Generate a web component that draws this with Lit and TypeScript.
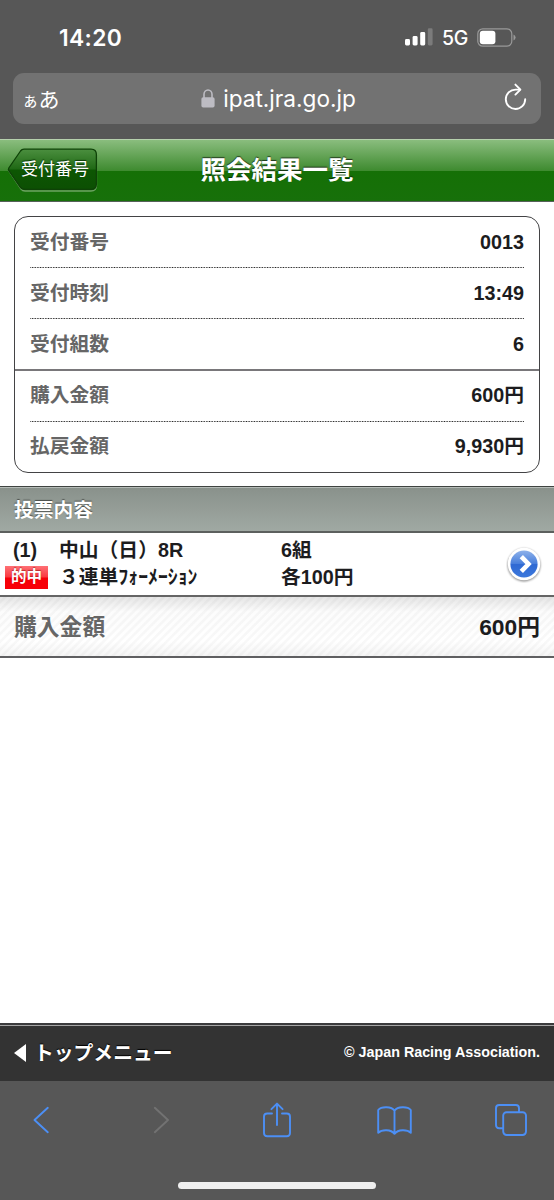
import { LitElement, html, css } from "lit";
import { customElement } from "lit/decorators.js";

const summary = [
  [
    ["受付番号", "0013"],
    ["受付時刻", "13:49"],
    ["受付組数", "6"],
  ],
  [
    ["購入金額", "600円"],
    ["払戻金額", "9,930円"],
  ],
];

@customElement("phone-chrome")
class PhoneChrome extends LitElement {
  static styles = css`
    :host { display: block; height: 139px; background: #575757; color: #fff;
      font-family: Inter, "Noto Sans CJK JP", sans-serif; }
    .status { display: flex; align-items: center; justify-content: space-between;
      height: 73px; box-sizing: border-box; padding: 1px 38px 0 59px; }
    .clock { font-size: 22.8px; font-weight: 600; letter-spacing: 0.35px; }
    .signals { display: flex; align-items: center; }
    .net { font-size: 19.5px; font-weight: 500; margin: 1px 9px 0 9px; letter-spacing: -0.3px; }
    .address { display: grid; grid-template-columns: 80px 1fr 80px; align-items: center;
      margin: 0 13px; height: 51px; border-radius: 11px; background: #727272; }
    .aa { padding: 0 0 0 9px; font-family: "Noto Sans CJK JP", sans-serif; font-size: 21px;
      font-weight: 400; white-space: nowrap; line-height: 28px; }
    .small { font-size: 16.5px; }
    .host { display: flex; justify-content: center; align-items: center; gap: 8px;
      font-size: 22.6px; padding-left: 3px; }
    .reload { justify-self: end; margin: 0 14px 2px 0; }
    svg { display: block; flex: none; }
  `;
  render() {
    return html`
      <div class="status">
        <span class="clock">14:20</span>
        <div class="signals">
          <svg width="28" height="18" viewBox="0 0 28 18" fill="#fff">
            <rect x="0" y="11" width="5" height="6.5" rx="1.4" />
            <rect x="7.6" y="8" width="5" height="9.5" rx="1.4" />
            <rect x="15.2" y="4" width="5" height="13.5" rx="1.4" />
            <rect x="22.8" y="0.3" width="4.8" height="17.2" rx="1.4" fill="#7b7b7b" />
          </svg>
          <span class="net">5G</span>
          <svg width="39" height="19" viewBox="0 0 39 19">
            <rect x="0.8" y="0.8" width="34" height="17.4" rx="5" fill="none" stroke="#999" stroke-width="1.2" />
            <rect x="2.8" y="2.8" width="15.6" height="13.4" rx="3" fill="#fff" />
            <path d="M36.5 6.6Q38.6 7.4 38.6 9.5T36.5 12.4Z" fill="#999" />
          </svg>
        </div>
      </div>
      <div class="address">
        <span class="aa"><span class="small">ぁ</span>あ</span>
        <div class="host">
          <svg width="14" height="19" viewBox="0 0 14 19">
            <path d="M3 9V5.3a4 4.3 0 0 1 8 0V9" fill="none" stroke="#bdbcc3" stroke-width="1.6" />
            <rect x="0.4" y="8.3" width="13.2" height="10.3" rx="1.8" fill="#bdbcc3" />
          </svg>
          <span class="url">ipat.jra.go.jp</span>
        </div>
        <svg class="reload" width="24" height="30" viewBox="0 0 24 30" fill="none" stroke="#fff" stroke-width="1.9" stroke-linecap="round" stroke-linejoin="round">
          <path d="M16.8 6.6H12.5A9.7 9.7 0 1 0 22.2 16.3" />
          <path d="M12.4 1.6L17.4 6.6L12.4 11.6" />
        </svg>
      </div>
    `;
  }
}

@customElement("page-header")
class PageHeader extends LitElement {
  static styles = css`
    :host { display: grid; grid-template-columns: 110px 1fr 110px; align-items: center;
      height: 63px; box-sizing: border-box; border-top: 1px solid #b6d0ad; border-bottom: 1px solid #56615a;
      background: linear-gradient(#8abd7e 0, #3f8b30 50%, #157006 50%, #17700a 100%);
      font-family: "Liberation Sans", "Noto Sans CJK JP", sans-serif; color: #fff; }
    .back { display: grid; width: 92px; height: 45px; margin: 0 0 0 7px; }
    .shape, .label { grid-area: 1 / 1; }
    .label { font-size: 17px; line-height: 42px; padding: 1px 0 0 14px; white-space: nowrap;
      text-shadow: 0 -1px 1px #0b3a05; z-index: 1; }
    .title { margin: 0 0 2px; text-align: center; font-size: 25.5px; font-weight: 700; line-height: 40px;
      white-space: nowrap; text-shadow: 0 -1px 1px rgba(0,0,0,.65); }
  `;
  render() {
    return html`
      <div class="back">
        <svg class="shape" width="92" height="45" viewBox="0 0 92 45">
          <defs>
            <linearGradient id="g" x1="0" y1="0" x2="0" y2="1">
              <stop offset="0" stop-color="#4b8f3f" />
              <stop offset="0.5" stop-color="#1f6814" />
              <stop offset="0.51" stop-color="#0d5703" />
              <stop offset="1" stop-color="#0c4f03" />
            </linearGradient>
          </defs>
          <path d="M16.5 2.5H84Q89.5 2.5 89.5 8V37.5Q89.5 43 84 43H18Q15.5 43 14 41L1.5 22.5" fill="none" stroke="#6da262" stroke-width="1.3" />
          <path d="M17 1.2H84Q89.4 1.2 89.4 6.6V36Q89.4 41.4 84 41.4H17.5Q15 41.4 13.5 39.5L1.8 22.6Q1 21.3 1.8 20L13.5 3Q14.8 1.2 17 1.2Z" fill="url(#g)" stroke="#0e4207" stroke-width="1.3" />
        </svg>
        <span class="label">受付番号</span>
      </div>
      <h1 class="title">照会結果一覧</h1>
    `;
  }
}

@customElement("receipt-summary")
class ReceiptSummary extends LitElement {
  static styles = css`
    :host { display: block; margin: 14px 14px 0; height: 257px; box-sizing: border-box;
      border: 1px solid #434345; border-radius: 14px; background: #fff;
      font: 700 19.8px "Liberation Sans", "Noto Sans CJK JP", sans-serif; }
    .group + .group { border-top: 2px solid #79777a; }
    .group + .group .row { padding-bottom: 2px; }
    .row { display: flex; justify-content: space-between; align-items: center;
      height: 50px; box-sizing: border-box; margin: 0 15px; line-height: 30px; }
    .dots { height: 1px; margin: 0 15px;
      background: repeating-linear-gradient(90deg, #222 0, #eee 1.32px, #222 2.64px); }
    .name { color: #666; }
    .value { color: #1c1c1e; }
  `;
  render() {
    return summary.map(
      (group) => html`<div class="group">
        ${group.map(
          ([name, value], i) => html`
            ${i ? html`<div class="dots"></div>` : ""}
            <div class="row"><span class="name">${name}</span><span class="value">${value}</span></div>
          `
        )}
      </div>`
    );
  }
}

@customElement("bet-list")
class BetList extends LitElement {
  static styles = css`
    :host { display: block; margin-top: 13px;
      font: 700 19.8px "Liberation Sans", "Noto Sans CJK JP", sans-serif; color: #1c1c1e; }
    .heading { height: 47px; box-sizing: border-box; border-top: 1px solid #3f4341; border-bottom: 2px solid #5c605e;
      box-shadow: inset 0 1px #b5bbb7; background: linear-gradient(#89918b, #a0a9a3);
      padding-left: 14px; line-height: 46px; color: #fff; text-shadow: 0 -1px 1px rgba(0,0,0,.5); }
    .bet { display: grid; grid-template-columns: 54px 222px 1fr 48px; align-items: center;
      height: 64px; box-sizing: border-box; padding-left: 5px; border-bottom: 2px solid #656565; }
    .col { display: grid; grid-template-rows: 27px 27px; align-items: center; line-height: 27px; white-space: nowrap; }
    .no { padding-left: 8px; }
    .hit { width: 43px; height: 23px; line-height: 22px; text-align: center; font-size: 15.5px; color: #fff;
      background: linear-gradient(#ff7075, #f93a40 48%, #f60008 52%, #f80008);
      text-shadow: 0 -1px 1px rgba(120,0,0,.5); }
    .go { display: block; }
    .total { display: flex; justify-content: space-between; align-items: center; height: 61px;
      box-sizing: border-box; padding: 0 14px 2px; font-size: 22.8px; border-bottom: 2px solid #5f5f61;
      background: linear-gradient(rgba(0,0,0,.1), rgba(0,0,0,.01) 25%, rgba(0,0,0,0) 75%, rgba(0,0,0,.04)),
        repeating-linear-gradient(135deg, #fff 0 2px, #f8f8f8 3px 4.6px, #fff 5.6px); }
    .name { color: #666; }
  `;
  render() {
    return html`
      <div class="heading">投票内容</div>
      <div class="bet">
        <div class="col"><span class="no">(1)</span><span class="hit">的中</span></div>
        <div class="col"><span>中山（日）8R</span><span>３連単ﾌｫｰﾒｰｼｮﾝ</span></div>
        <div class="col"><span>6組</span><span>各100円</span></div>
        <svg class="go" width="38" height="38" viewBox="0 0 38 38">
          <defs>
            <linearGradient id="b" x1="0" y1="0" x2="0" y2="1">
              <stop offset="0" stop-color="#8fb2ea" />
              <stop offset="0.48" stop-color="#4a80dc" />
              <stop offset="0.52" stop-color="#2f69d3" />
              <stop offset="1" stop-color="#3c78dc" />
            </linearGradient>
            <filter id="s" x="-20%" y="-20%" width="140%" height="140%"><feGaussianBlur stdDeviation="1.1" /></filter>
          </defs>
          <circle cx="18" cy="20" r="16.4" fill="#000" opacity="0.45" filter="url(#s)" />
          <circle cx="18" cy="19" r="16.2" fill="#fff" />
          <circle cx="18" cy="19" r="13.6" fill="url(#b)" />
          <path d="M15.3 11.6L22.5 19L15.3 26.4" fill="none" stroke="#fff" stroke-width="4.6" />
        </svg>
      </div>
      <div class="total"><span class="name">購入金額</span><span>600円</span></div>
    `;
  }
}

@customElement("page-footer")
class PageFooter extends LitElement {
  static styles = css`
    :host { display: flex; justify-content: space-between; align-items: center; height: 58px;
      box-sizing: border-box; border-top: 2px solid #3b3b3d; padding: 0 14px;
      box-shadow: inset 0 1px #a5a5a5; background: #333; color: #fff;
      font: 700 19.8px "Liberation Sans", "Noto Sans CJK JP", sans-serif; }
    .menu { display: flex; align-items: center; gap: 8px; line-height: 30px; text-shadow: 0 -1px 1px #000; }
    .copy { font-size: 14.3px; margin-bottom: 2px; }
  `;
  render() {
    return html`
      <span class="menu">
        <svg width="12" height="18" viewBox="0 0 12 18"><path d="M0 9L12 0V18Z" fill="#fff" /></svg>
        トップメニュー
      </span>
      <span class="copy">© Japan Racing Association.</span>
    `;
  }
}

@customElement("browser-toolbar")
class BrowserToolbar extends LitElement {
  static styles = css`
    :host { display: flex; flex-direction: column; align-items: center; height: 119px; background: #575757; }
    .icons { display: grid; grid-template-columns: 120px 120px 112px 123px 110px; place-items: center;
      align-self: flex-start; height: 78px; margin-left: -19px; }
    .icon { display: block; overflow: visible; fill: none; stroke: #4c8ff5; stroke-width: 1.9;
      stroke-linecap: round; stroke-linejoin: round; }
    .off { stroke: #727272; }
    .bar { width: 198px; height: 7px; margin-top: 23px; border-radius: 4px; background: #efefef; }
  `;
  render() {
    return html`
      <div class="icons">
        <svg class="icon" width="16" height="26" viewBox="0 0 16 26"><path d="M14.8 0.8L1.5 13L14.8 25.2" /></svg>
        <svg class="icon off" width="16" height="26" viewBox="0 0 16 26"><path d="M1.8 0.8L15 13L1.8 25.2" /></svg>
        <svg class="icon" width="28" height="36" viewBox="0 0 28 36">
          <path d="M9 11.5H4.2Q1 11.5 1 14.7V31Q1 34.2 4.2 34.2H23.8Q27 34.2 27 31V14.7Q27 11.5 23.8 11.5H19" />
          <path d="M14 23V2M8.4 7.2L14 1.6L19.6 7.2" />
        </svg>
        <svg class="icon" width="35" height="29" viewBox="0 0 35 29">
          <path d="M17.5 4.8C14.5.2 4.5.2 1.2 4V26.8C5 23.2 14 23.2 17.5 27.8C21 23.2 30 23.2 33.8 26.8V4C30.5.2 20.5.2 17.5 4.8V27.8" />
        </svg>
        <svg class="icon" width="32" height="32" viewBox="0 0 32 32">
          <path d="M7.8 24.3H4.2Q1 24.3 1 21.1V4.2Q1 1 4.2 1H20.8Q24 1 24 4.2V7.8" />
          <rect x="8.2" y="8.2" width="22.8" height="22.8" rx="3.4" />
        </svg>
      </div>
      <div class="bar"></div>
    `;
  }
}

@customElement("app-root")
class AppRoot extends LitElement {
  static styles = css`
    :host { display: flex; flex-direction: column; width: 554px; height: 1200px; overflow: hidden; background: #fff; }
    .content { flex: 1; min-height: 0; }
  `;
  render() {
    return html`
      <phone-chrome></phone-chrome>
      <page-header></page-header>
      <main class="content">
        <receipt-summary></receipt-summary>
        <bet-list></bet-list>
      </main>
      <page-footer></page-footer>
      <browser-toolbar></browser-toolbar>
    `;
  }
}
